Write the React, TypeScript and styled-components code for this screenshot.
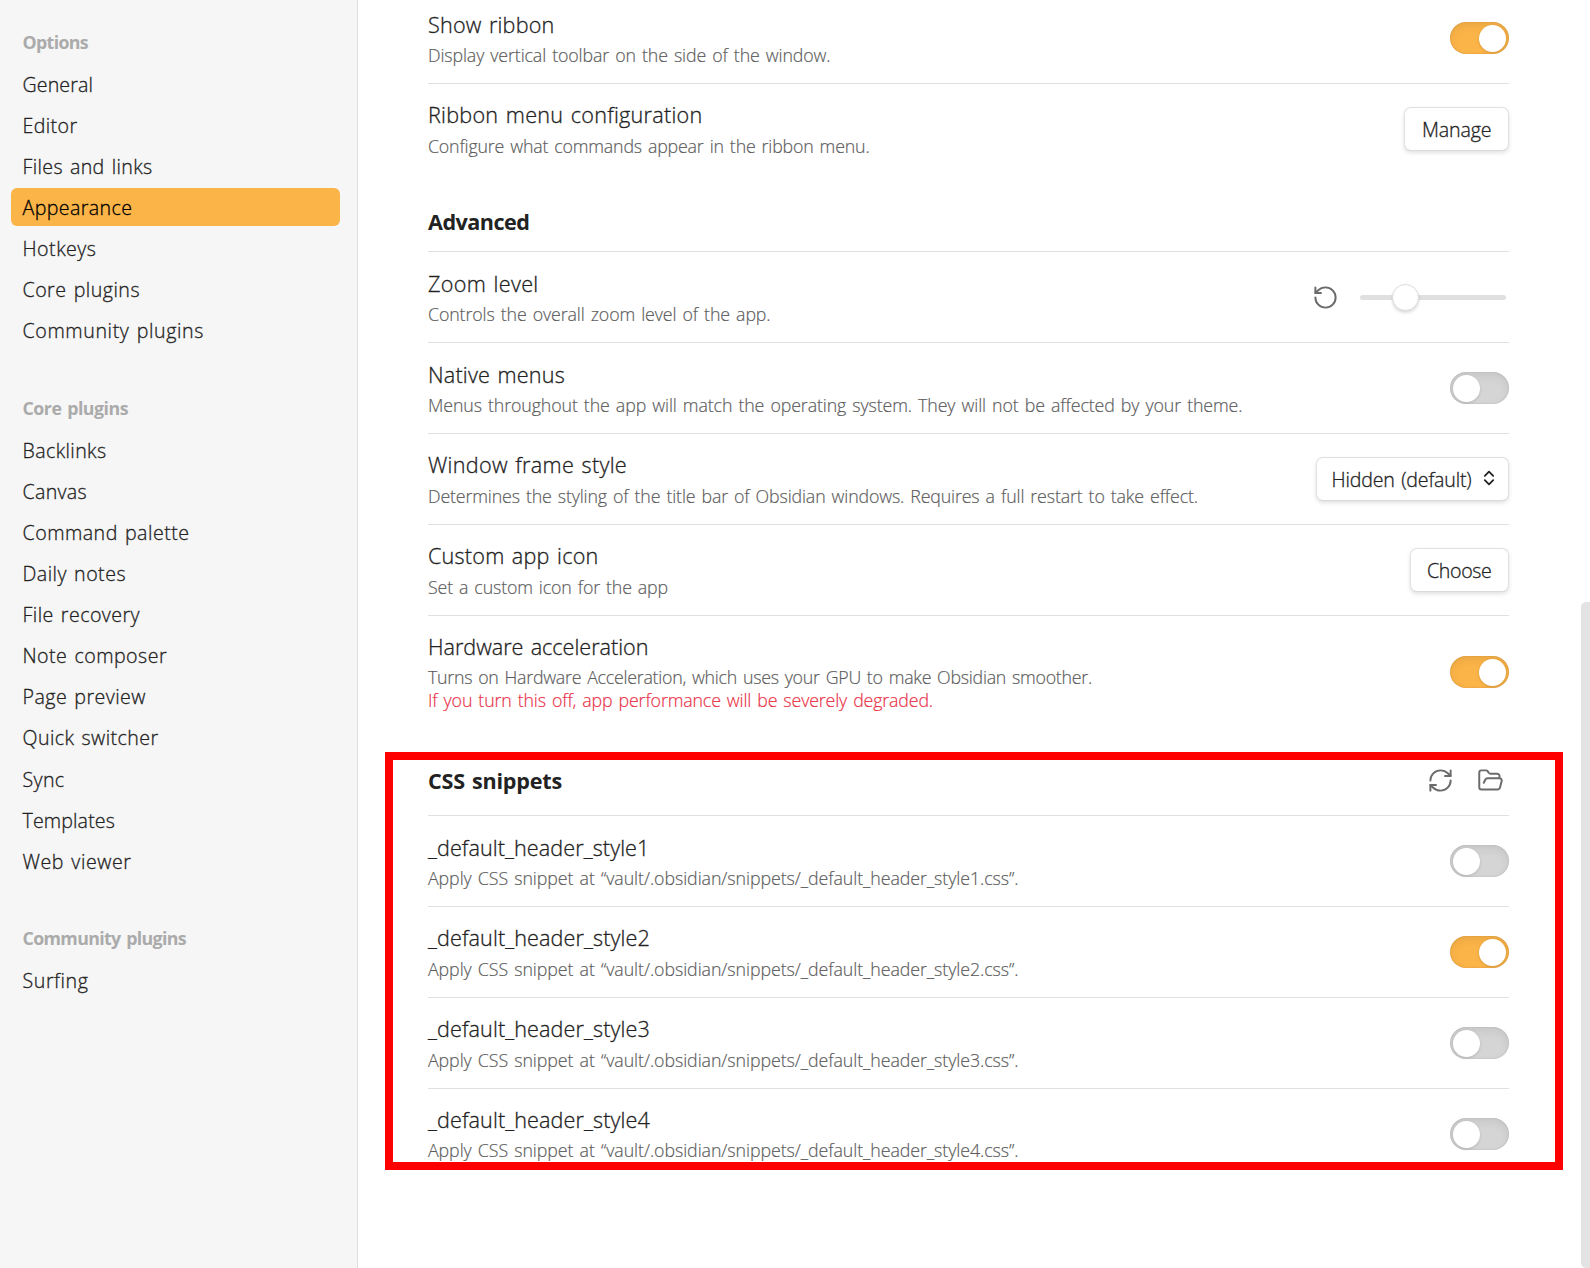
import React, { useLayoutEffect, useRef, useState } from 'react';
import styled, { createGlobalStyle } from 'styled-components';

const GlobalStyle = createGlobalStyle`
  * { box-sizing: border-box; }
  html, body { margin: 0; padding: 0; overflow: hidden; background: #fff; }
  body {
    font-family: 'Open Sans', 'Noto Sans', 'Noto Sans CJK KR', sans-serif;
    font-weight: 300;
    word-spacing: 0.1em;
    color: #222;
  }
`;

/* Text set to an exact measure by distributing the difference over its letters. */
const Measured = styled.span`
  display: inline-block;
  white-space: nowrap;
`;

function Fit({ text, width }: { text: string; width: number }) {
  const ref = useRef<HTMLSpanElement>(null);
  const [spacing, setSpacing] = useState(0);
  useLayoutEffect(() => {
    const el = ref.current;
    if (!el) return;
    el.style.letterSpacing = '0.001px';
    const natural = el.getBoundingClientRect().width;
    setSpacing((width - 1 - natural) / text.length);
  }, [text, width]);
  return (
    <Measured ref={ref} style={{ letterSpacing: `${spacing}px` }}>
      {text}
    </Measured>
  );
}

const Page = styled.div`
  display: flex;
  width: 1590px;
  height: 1268px;
  overflow: hidden;
  background: #fff;
`;

const Sidebar = styled.nav`
  flex: none;
  width: 358px;
  padding: 26.97px 17px 0 11px;
  background: #f6f6f6;
  border-right: 1px solid #e0e0e0;
`;

const NavGroup = styled.div`
  display: flex;
  flex-direction: column;
  gap: 3px;
  margin-bottom: 43.37px;
`;

const NavHeading = styled.div`
  height: 35px;
  padding: 1.05px 0 0 11.5px;
  font-size: 17.8px;
  line-height: 28px;
  font-weight: 700;
  color: #ababab;
`;

const NavItem = styled.div<{ $active?: boolean }>`
  height: 38.08px;
  padding-left: 11.5px;
  border-radius: 6px;
  font-size: 19.6px;
  line-height: 40px;
  -webkit-text-stroke: 0.3px currentColor;
  color: ${(p) => (p.$active ? '#000' : '#222')};
  background: ${(p) => (p.$active ? '#fbb448' : 'transparent')};
`;

const Main = styled.main`
  flex: 1;
  display: flex;
  justify-content: space-between;
`;

const Content = styled.div`
  width: 1081px;
  margin-left: 70px;
`;

const Section = styled.section`
  position: relative;
`;

const Row = styled.div<{ $height?: number }>`
  display: flex;
  align-items: center;
  justify-content: space-between;
  height: ${(p) => p.$height ?? 91}px;
  border-top: 1px solid #e0e0e0;
`;

const TopRow = styled(Row)`
  margin-top: -8px;
`;

const Info = styled.div`
  min-height: 57px;
`;

const Name = styled.div<{ $raised?: boolean }>`
  height: 31px;
  font-size: 21.6px;
  line-height: ${(p) => (p.$raised ? 27 : 29)}px;
  -webkit-text-stroke: 0.3px currentColor;
  color: #222;
`;

const Description = styled.div<{ $gap?: number; $warning?: boolean }>`
  height: 23px;
  margin-top: ${(p) => p.$gap ?? 3}px;
  font-size: 17.8px;
  line-height: 23px;
  -webkit-text-stroke: 0.18px currentColor;
  color: ${(p) => (p.$warning ? '#e93147' : '#5c5c5c')};
`;

const Heading = styled.div<{ $height: number; $bottom: number }>`
  display: flex;
  align-items: flex-end;
  justify-content: space-between;
  height: ${(p) => p.$height}px;
  padding-bottom: ${(p) => p.$bottom}px;
  font-size: 21.6px;
  line-height: 31px;
  font-weight: 700;
`;

const Controls = styled.div`
  display: flex;
  align-items: center;
`;

const IconPair = styled(Controls)`
  gap: 23px;
  padding: 0 5.5px 2px 0;
`;

const Switch = styled.div<{ $on?: boolean }>`
  display: flex;
  align-items: center;
  justify-content: ${(p) => (p.$on ? 'flex-end' : 'flex-start')};
  width: 59px;
  height: 32px;
  padding: 0 3px;
  border-radius: 16px;
  background: ${(p) => (p.$on ? '#fbb448' : '#d5d5d5')};
  box-shadow: inset 0 4px 10px rgba(0, 0, 0, 0.07), inset 0 0 1.5px rgba(0, 0, 0, 0.21);
`;

const Knob = styled.div`
  width: 27px;
  height: 27px;
  border-radius: 50%;
  background: #fff;
  box-shadow: 0 1px 3px rgba(0, 0, 0, 0.15);
`;

const Button = styled.div<{ $width: number; $left: number }>`
  display: flex;
  align-items: center;
  width: ${(p) => p.$width}px;
  height: 44px;
  padding: 2px 0 0 ${(p) => p.$left}px;
  border: 1px solid #e0e0e0;
  border-bottom-color: #dadada;
  border-radius: 7px;
  background: #fff;
  box-shadow: 0 2px 4px rgba(0, 0, 0, 0.12);
  font-size: 19.6px;
  line-height: 28px;
  -webkit-text-stroke: 0.3px currentColor;
  color: #222;
`;

const Chevrons = styled.svg`
  margin: -4px 0 0 12px;
`;

const Slider = styled.div`
  display: flex;
  align-items: center;
  width: 146px;
  height: 5px;
  margin: 0 3px 0 21px;
  padding-left: 32px;
  border-radius: 3px;
  background: #e0e0e0;
`;

const SliderThumb = styled.div`
  flex: none;
  width: 27px;
  height: 27px;
  border: 1px solid #dcdcdc;
  border-radius: 50%;
  background: #fff;
  box-shadow: 0 2px 3px rgba(0, 0, 0, 0.14);
`;

const Outline = styled.div`
  position: absolute;
  left: -43px;
  top: 24px;
  width: 1178px;
  height: 418px;
  border: 8px solid #f00;
`;

const Scrollbar = styled.div`
  width: 9px;
  height: 666px;
  margin-top: 602px;
  border-radius: 5px 0 0 5px;
  background: #e3e3e3;
`;

function Icon({ paths }: { paths: string[] }) {
  return (
    <svg width="27" height="27" viewBox="0 0 24 24" fill="none" stroke="#6b6b6b" strokeWidth="1.75" strokeLinecap="round" strokeLinejoin="round">
      {paths.map((d) => (
        <path key={d} d={d} />
      ))}
    </svg>
  );
}

const RESET = ['M3 12a9 9 0 1 0 9-9 9.75 9.75 0 0 0-6.74 2.74L3 8', 'M3 3v5h5'];
const REFRESH = [
  'M3 12a9 9 0 0 1 9-9 9.75 9.75 0 0 1 6.74 2.74L21 8',
  'M21 3v5h-5',
  'M21 12a9 9 0 0 1-9 9 9.75 9.75 0 0 1-6.74-2.74L3 16',
  'M8 16H3v5',
];
const FOLDER = [
  'm6 14 1.45-2.9A2 2 0 0 1 9.24 10H20a2 2 0 0 1 1.94 2.5l-1.55 6a2 2 0 0 1-1.94 1.5H4a2 2 0 0 1-2-2V5c0-1.1.9-2 2-2h3.93a2 2 0 0 1 1.66.9l.82 1.2a2 2 0 0 0 1.66.9H18a2 2 0 0 1 2 2v2',
];

type Label = [string, number];

const NAV: { heading: Label; items: Label[] }[] = [
  {
    heading: ['Options', 66.5],
    items: [
      ['General', 71.5], ['Editor', 56], ['Files and links', 131], ['Appearance', 111],
      ['Hotkeys', 75], ['Core plugins', 118.5], ['Community plugins', 182.5],
    ],
  },
  {
    heading: ['Core plugins', 106.5],
    items: [
      ['Backlinks', 85], ['Canvas', 65.5], ['Command palette', 168], ['Daily notes', 104.5],
      ['File recovery', 118.5], ['Note composer', 145.5], ['Page preview', 124.5],
      ['Quick switcher', 137], ['Sync', 43], ['Templates', 93.5], ['Web viewer', 110],
    ],
  },
  { heading: ['Community plugins', 164.5], items: [['Surfing', 67]] },
];

const SNIPPETS = [
  { id: 1, width: 222.5 },
  { id: 2, width: 223, on: true, raised: true },
  { id: 3, width: 223, raised: true },
  { id: 4, width: 223, raised: true, gap: 2 },
];

function Toggle({ on }: { on?: boolean }) {
  return (
    <Switch $on={on}>
      <Knob />
    </Switch>
  );
}

interface SettingProps {
  name: Label;
  desc: Label;
  warning?: Label;
  raised?: boolean;
  gap?: number;
  height?: number;
  children: React.ReactNode;
}

function Setting({ name, desc, warning, raised, gap, height, children }: SettingProps) {
  return (
    <Row $height={height}>
      <Info>
        <Name $raised={raised}><Fit text={name[0]} width={name[1]} /></Name>
        <Description $gap={gap}><Fit text={desc[0]} width={desc[1]} /></Description>
        {warning && <Description $gap={0} $warning><Fit text={warning[0]} width={warning[1]} /></Description>}
      </Info>
      <Controls>{children}</Controls>
    </Row>
  );
}

export default function App() {
  return (
    <Page>
      <GlobalStyle />
      <Sidebar>
        {NAV.map((group) => (
          <NavGroup key={group.heading[0]}>
            <NavHeading><Fit text={group.heading[0]} width={group.heading[1]} /></NavHeading>
            {group.items.map(([label, width]) => (
              <NavItem key={label} $active={label === 'Appearance'}>
                <Fit text={label} width={width} />
              </NavItem>
            ))}
          </NavGroup>
        ))}
      </Sidebar>
      <Main>
        <Content>
          <TopRow>
            <Info>
              <Name><Fit text="Show ribbon" width={127.5} /></Name>
              <Description><Fit text="Display vertical toolbar on the side of the window." width={403.5} /></Description>
            </Info>
            <Toggle on />
          </TopRow>
          <Setting raised name={['Ribbon menu configuration', 275.5]} desc={['Configure what commands appear in the ribbon menu.', 442.5]}>
            <Button $width={105} $left={17}><Fit text="Manage" width={70.5} /></Button>
          </Setting>
          <Heading $height={77} $bottom={14}><Fit text="Advanced" width={102.5} /></Heading>
          <Setting name={['Zoom level', 111.5]} desc={['Controls the overall zoom level of the app.', 343.5]}>
            <Icon paths={RESET} />
            <Slider><SliderThumb /></Slider>
          </Setting>
          <Setting name={['Native menus', 138]} desc={['Menus throughout the app will match the operating system. They will not be affected by your theme.', 815.5]}>
            <Toggle />
          </Setting>
          <Setting raised name={['Window frame style', 200]} desc={['Determines the styling of the title bar of Obsidian windows. Requires a full restart to take effect.', 771]}>
            <Button $width={193} $left={14.5}>
              <Fit text="Hidden (default)" width={141} />
              <Chevrons width="12" height="16" viewBox="0 0 12 16" fill="none" stroke="#222" strokeWidth="1.8" strokeLinecap="round" strokeLinejoin="round">
                <path d="M1.8 5.8 6 1.6l4.2 4.2M1.8 10.2 6 14.4l4.2-4.2" />
              </Chevrons>
            </Button>
          </Setting>
          <Setting raised name={['Custom app icon', 171.5]} desc={['Set a custom icon for the app', 241]}>
            <Button $width={99} $left={16}><Fit text="Choose" width={65.5} /></Button>
          </Setting>
          <Setting
            height={113}
            name={['Hardware acceleration', 221.5]}
            desc={['Turns on Hardware Acceleration, which uses your GPU to make Obsidian smoother.', 665]}
            warning={['If you turn this off, app performance will be severely degraded.', 506]}
          >
            <Toggle on />
          </Setting>
          <Section>
            <Heading $height={87} $bottom={19}>
              <Fit text="CSS snippets" width={135} />
              <IconPair>
                <Icon paths={REFRESH} />
                <Icon paths={FOLDER} />
              </IconPair>
            </Heading>
            {SNIPPETS.map((s) => (
              <Setting
                key={s.id}
                raised={s.raised}
                gap={s.gap}
                name={[`_default_header_style${s.id}`, s.width]}
                desc={[`Apply CSS snippet at “vault/.obsidian/snippets/_default_header_style${s.id}.css”.`, 591.5]}
              >
                <Toggle on={s.on} />
              </Setting>
            ))}
            <Outline />
          </Section>
        </Content>
        <Scrollbar />
      </Main>
    </Page>
  );
}
